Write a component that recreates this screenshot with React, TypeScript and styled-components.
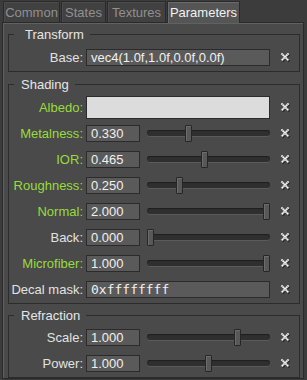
import styled, { createGlobalStyle } from 'styled-components';

const GlobalStyle = createGlobalStyle`
    html, body {
        margin: 0;
        padding: 0;
        background: #3c3c3c;
    }
    body {
        font-family: 'Liberation Sans', Arial, sans-serif;
        font-size: 13px;
    }
`;

const TABS = [
    { name: 'Common', width: 57 },
    { name: 'States', width: 45 },
    { name: 'Textures', width: 59 },
    { name: 'Parameters', width: 73 },
];

interface SliderRow {
    label: string;
    value: string;
    frac: number;
    hot?: boolean;
}

const SHADING: SliderRow[] = [
    { label: 'Metalness', value: '0.330', frac: 0.33, hot: true },
    { label: 'IOR', value: '0.465', frac: 0.465, hot: true },
    { label: 'Roughness', value: '0.250', frac: 0.25, hot: true },
    { label: 'Normal', value: '2.000', frac: 1, hot: true },
    { label: 'Back', value: '0.000', frac: 0 },
    { label: 'Microfiber', value: '1.000', frac: 1, hot: true },
];

const REFRACTION: SliderRow[] = [
    { label: 'Scale', value: '1.000', frac: 0.75 },
    { label: 'Power', value: '1.000', frac: 0.5 },
];

export default function App() {
    return (
        <>
            <GlobalStyle />
            <Root>
                <TabBar>
                    {TABS.map((t) => (
                        <Tab key={t.name} $width={t.width} $active={t.name === 'Parameters'}>
                            {t.name}
                        </Tab>
                    ))}
                </TabBar>
                <Panel>
                    <Group>
                        <Legend $pad={11}>Transform</Legend>
                        <Row>
                            <Label>Base:</Label>
                            <TextField>vec4(1.0f,1.0f,0.0f,0.0f)</TextField>
                            <ClearButton />
                        </Row>
                    </Group>
                    <Group>
                        <Legend>Shading</Legend>
                        <Row>
                            <Label $hot>Albedo:</Label>
                            <ColorField />
                            <ClearButton />
                        </Row>
                        {SHADING.map((r) => (
                            <Slider key={r.label} row={r} />
                        ))}
                        <Row>
                            <Label>Decal mask:</Label>
                            <TextField $mono>0xffffffff</TextField>
                            <ClearButton />
                        </Row>
                    </Group>
                    <Group $tight>
                        <Legend>Refraction</Legend>
                        {REFRACTION.map((r) => (
                            <Slider key={r.label} row={r} />
                        ))}
                    </Group>
                </Panel>
            </Root>
        </>
    );
}

function Slider({ row }: { row: SliderRow }) {
    return (
        <Row>
            <Label $hot={row.hot}>{row.label}:</Label>
            <SliderCell>
                <NumberField>{row.value}</NumberField>
                <Track>
                    <Groove />
                    <Thumb style={{ left: `calc(${row.frac} * (100% - 7px))` }} />
                </Track>
            </SliderCell>
            <ClearButton />
        </Row>
    );
}

const CROSS = 'M1.5 1.5 L8.5 8.5 M8.5 1.5 L1.5 8.5';

function ClearButton() {
    return (
        <ClearCell>
            <svg width="11" height="11" viewBox="0 0 11 11">
                <path d={CROSS} transform="translate(0.8 0.8)" stroke="#262626" strokeWidth="2.4" />
                <path d={CROSS} stroke="#a8a8a8" strokeWidth="2.4" />
                <path d={CROSS} stroke="#ffffff" strokeWidth="1.3" strokeDasharray="1.1 0.9" />
            </svg>
        </ClearCell>
    );
}

const Root = styled.div`
    width: 307px;
    height: 380px;
    overflow: hidden;
    background: #3c3c3c;
`;

const TabBar = styled.div`
    display: flex;
    gap: 1px;
    height: 22px;
    padding: 1px 0 0 3px;
    box-sizing: border-box;
    align-items: flex-end;
`;

const Tab = styled.div<{ $active?: boolean; $width: number }>`
    width: ${({ $width }) => $width}px;
    height: ${({ $active }) => ($active ? '22px' : '21px')};
    line-height: 21px;
    text-align: center;
    white-space: nowrap;
    box-sizing: border-box;
    border: 1px solid #2a2a2a;
    border-bottom: none;
    box-shadow: inset 1px 1px 0 ${({ $active }) => ($active ? '#6a6a6a' : '#4c4c4c')};
    background: ${({ $active }) => ($active ? '#555555' : '#414141')};
    color: ${({ $active }) => ($active ? '#f2f2f2' : '#909090')};
    position: relative;
    z-index: ${({ $active }) => ($active ? 1 : 0)};
    margin-bottom: ${({ $active }) => ($active ? '-1px' : '0')};
`;

const Panel = styled.div`
    margin-left: 2px;
    width: 302px;
    height: 357px;
    box-sizing: border-box;
    border: 1px solid #2a2a2a;
    box-shadow: inset 1px 1px 0 #616161;
    background: #4a4a4a;
    padding: 4px 3px 0 5px;
    display: flex;
    flex-direction: column;
    gap: 5px;
`;

const Group = styled.fieldset<{ $tight?: boolean }>`
    margin: ${({ $tight }) => ($tight ? '-1px 0 0' : '0')};
    padding: ${({ $tight }) => ($tight ? '1px' : '2px')} 0 1px 1px;
    border: 1px solid #2c2c2c;
    min-width: 0;
`;

const Legend = styled.legend<{ $pad?: number }>`
    margin-left: 4px;
    padding: 0 6px 0 ${({ $pad }) => $pad ?? 7}px;
    line-height: 15px;
    color: #e6e6e6;
`;

const Row = styled.div`
    display: grid;
    grid-template-columns: 73px 185px 1fr;
    column-gap: 3px;
    height: 26px;
    align-items: center;
`;

const Label = styled.div<{ $hot?: boolean }>`
    text-align: right;
    white-space: nowrap;
    color: ${({ $hot }) => ($hot ? '#97dc3c' : '#e2e2e2')};
`;

const TextField = styled.div<{ $mono?: boolean }>`
    height: 17px;
    line-height: 16px;
    box-sizing: border-box;
    border: 1px solid #2b2b2b;
    background: #5a5a5a;
    color: #f0f0f0;
    padding-left: 4px;
    margin-right: 1px;
    white-space: nowrap;
    overflow: hidden;
    font-family: ${({ $mono }) =>
        $mono ? "'DejaVu Sans Mono', 'Liberation Mono', monospace" : 'inherit'};
`;

const ColorField = styled.div`
    height: 23px;
    margin-right: 1px;
    box-sizing: border-box;
    border: 1px solid #2b2b2b;
    background: #dcdcdc;
`;

const SliderCell = styled.div`
    display: flex;
    align-items: center;
    gap: 7px;
    margin-right: 1px;
`;

const NumberField = styled(TextField)`
    width: 54px;
    flex: none;
    margin-right: 0;
`;

const Track = styled.div`
    position: relative;
    flex: 1;
    height: 17px;
    display: flex;
    align-items: center;
`;

const Groove = styled.div`
    width: 100%;
    height: 6px;
    border-radius: 3px;
    background: #2f2f2f;
    box-shadow: inset 0 1px 1px #1e1e1e, 0 1px 0 #5b5b5b;
`;

const Thumb = styled.div`
    position: absolute;
    top: 0;
    width: 7px;
    height: 17px;
    box-sizing: border-box;
    border: 1px solid #262626;
    border-radius: 1px;
    background: #585858;
    box-shadow: inset 1px 1px 0 #6c6c6c;
`;

const ClearCell = styled.div`
    display: flex;
    justify-content: center;
    align-items: center;
    padding-right: 2px;
`;
